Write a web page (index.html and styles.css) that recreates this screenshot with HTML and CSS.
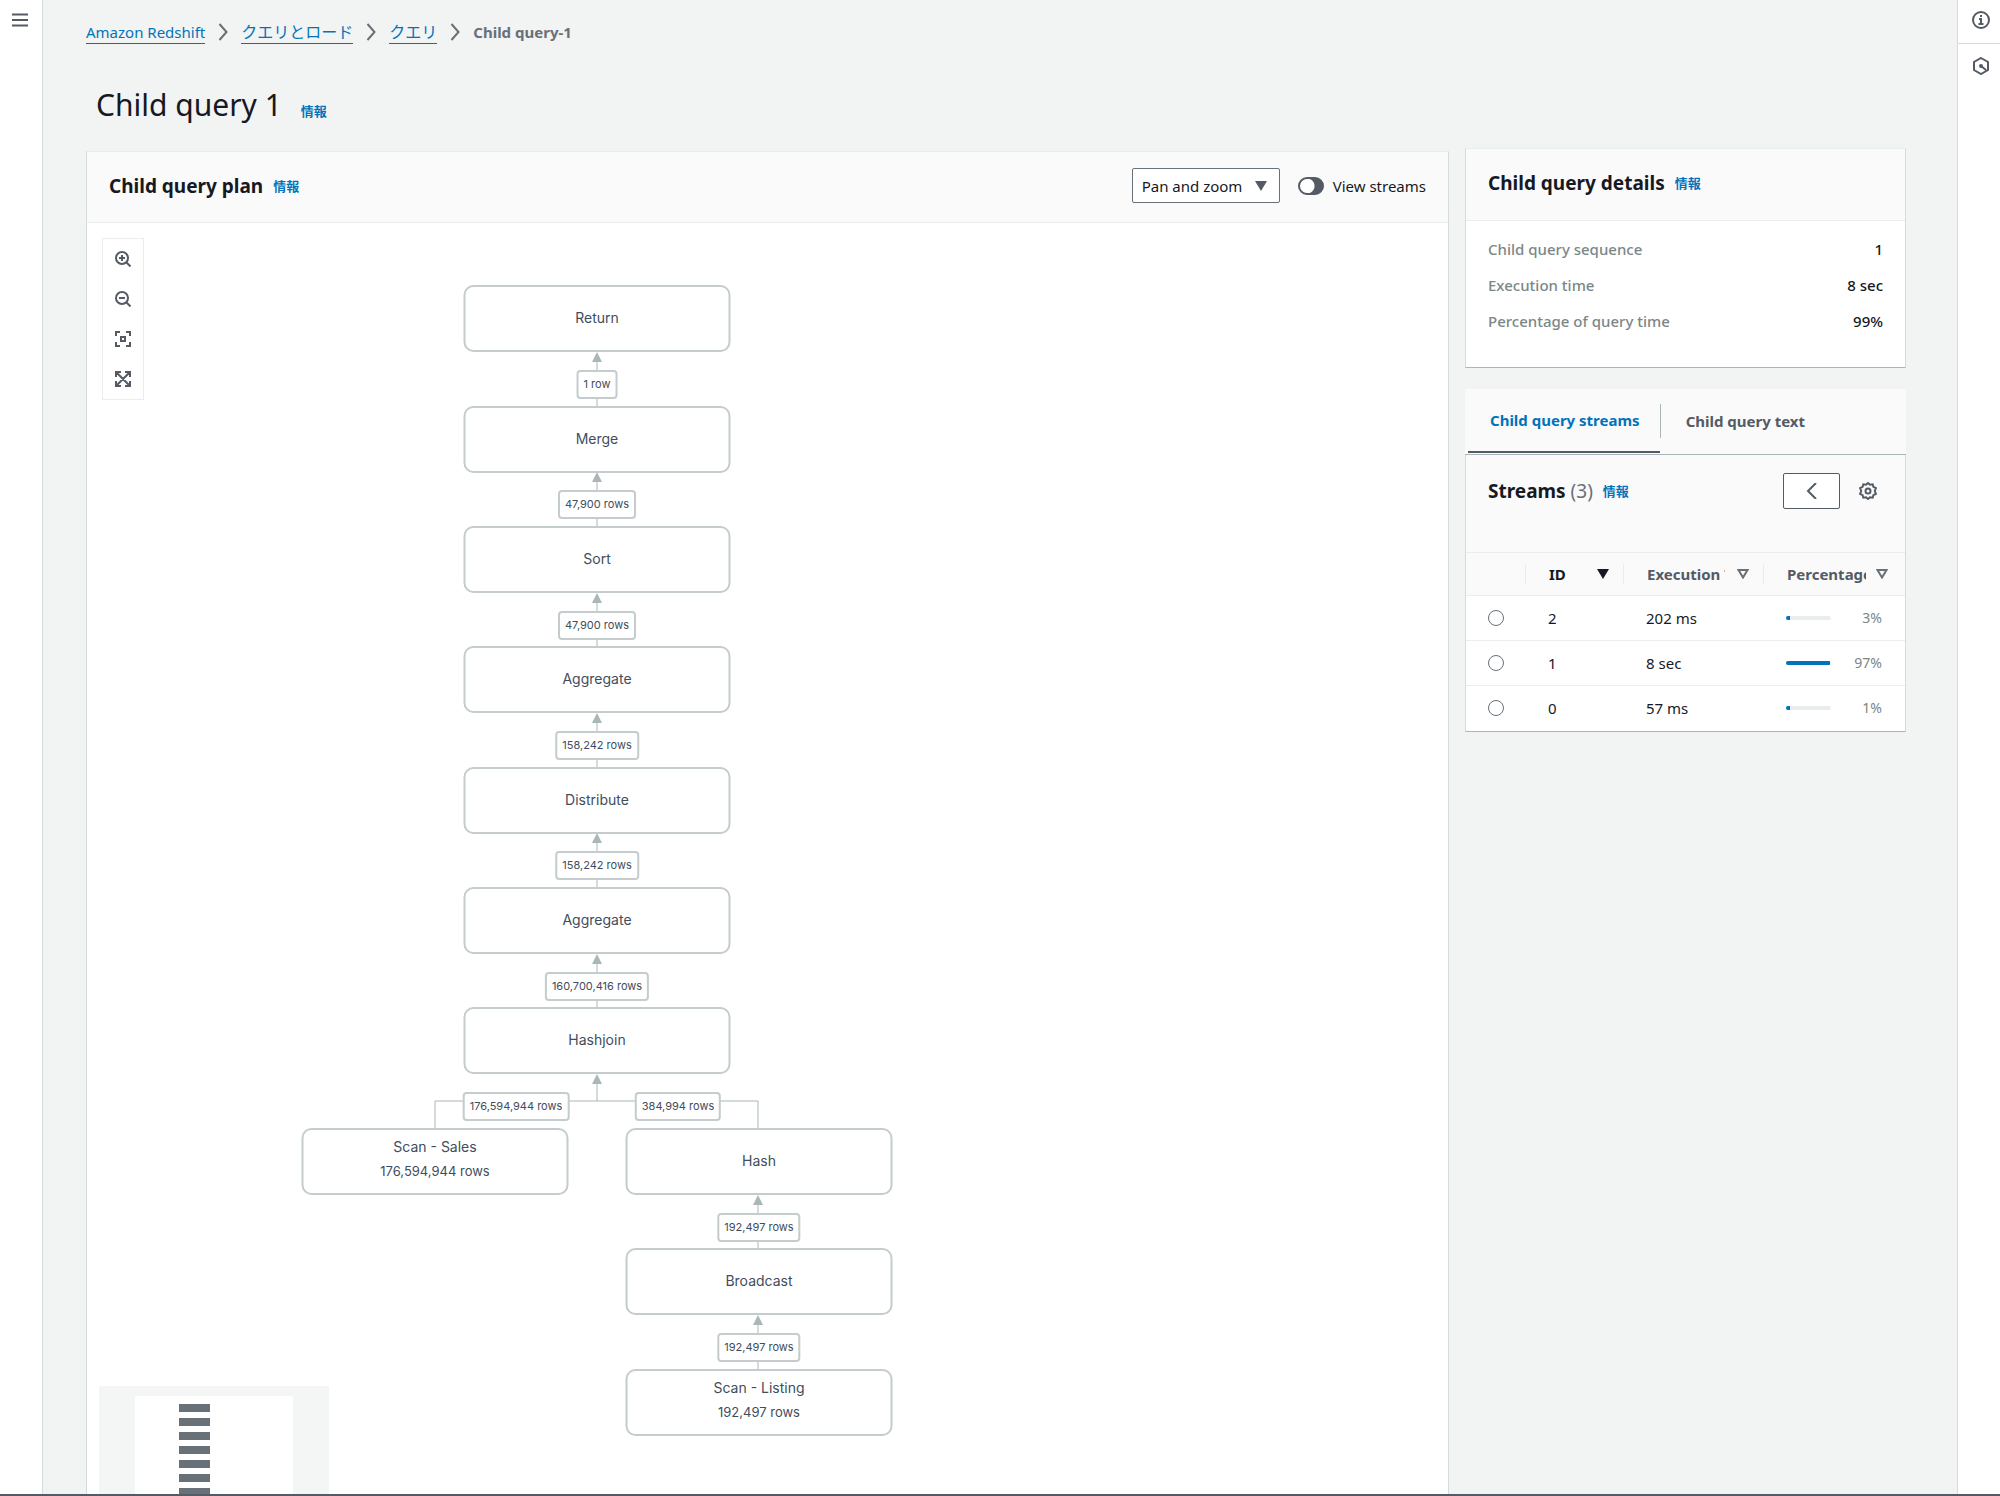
FILE: index.html
```html
<!DOCTYPE html>
<html lang="ja">
<head>
<meta charset="utf-8">
<meta name="viewport" content="width=device-width, initial-scale=1">
<title>Child query 1 - Amazon Redshift</title>
<link rel="stylesheet" href="styles.css">
</head>
<body>
<div class="app">
  <nav class="rail rail-left" aria-label="Navigation">
    <button class="icon-button" type="button" aria-label="Open navigation">
      <svg class="icon" viewBox="0 0 16 16"><path d="M0 2.5h16M0 8h16M0 13.5h16"/></svg>
    </button>
  </nav>

  <main class="main">
    <nav aria-label="Breadcrumb">
      <ol class="breadcrumb">
        <li><a href="#">Amazon Redshift</a></li>
        <li><svg class="chevron" viewBox="0 0 10 18"><path d="M1.5 1l7 8-7 8"/></svg><a class="kana" href="#">クエリとロード</a></li>
        <li><svg class="chevron" viewBox="0 0 10 18"><path d="M1.5 1l7 8-7 8"/></svg><a class="kana" href="#">クエリ</a></li>
        <li><svg class="chevron" viewBox="0 0 10 18"><path d="M1.5 1l7 8-7 8"/></svg><span class="current" aria-current="page">Child query-1</span></li>
      </ol>
    </nav>

    <header class="page-head">
      <h1>Child query 1</h1>
      <a class="info" href="#">情報</a>
    </header>

    <div class="columns">
      <section class="panel plan">
        <header class="panel-head">
          <h2>Child query plan</h2>
          <a class="info" href="#">情報</a>
          <div class="plan-tools">
            <div class="select">
              <select aria-label="Mode"><option>Pan and zoom</option></select>
              <svg class="caret" viewBox="0 0 12 10"><path d="M0 0h12L6 10z"/></svg>
            </div>
            <label class="toggle"><input type="checkbox">View streams</label>
          </div>
        </header>
        <div class="canvas">
          <div class="zoom-bar">
            <button class="icon-button" type="button" aria-label="Zoom in"><svg class="icon" viewBox="0 0 16 16"><circle cx="7" cy="7" r="6"/><path d="M11.5 11.5l4 4M4 7h6M7 4v6"/></svg></button>
            <button class="icon-button" type="button" aria-label="Zoom out"><svg class="icon" viewBox="0 0 16 16"><circle cx="7" cy="7" r="6"/><path d="M11.5 11.5l4 4M4 7h6"/></svg></button>
            <button class="icon-button" type="button" aria-label="Fit to screen"><svg class="icon" viewBox="0 0 16 16"><path d="M1 5V1h4M11 1h4v4M15 11v4h-4M5 15H1v-4M6 6h4v4H6z"/></svg></button>
            <button class="icon-button" type="button" aria-label="Full screen"><svg class="icon" viewBox="0 0 16 16"><path d="M1 6V1h5M10 1h5v5M15 10v5h-5M6 15H1v-5M1 1l14 14M15 1L1 15"/></svg></button>
          </div>

          <svg class="edges" width="806" height="1260" viewBox="0 0 806 1260">
            <path d="M510 135V183M510 255V304M510 376V424M510 496V544M510 616V665M510 737V785M510 857V878M348 906V878H671V906M671 978V1026M671 1098V1146"/>
            <path class="heads" d="M510 129l5 10h-10zM510 249l5 10h-10zM510 370l5 10h-10zM510 490l5 10h-10zM510 610l5 10h-10zM510 731l5 10h-10zM510 851l5 10h-10zM671 972l5 10h-10zM671 1092l5 10h-10z"/>
          </svg>

          <div class="node main-col row-1">Return</div>
          <div class="node main-col row-2">Merge</div>
          <div class="node main-col row-3">Sort</div>
          <div class="node main-col row-4">Aggregate</div>
          <div class="node main-col row-5">Distribute</div>
          <div class="node main-col row-6">Aggregate</div>
          <div class="node main-col row-7">Hashjoin</div>
          <div class="node scan left-col row-8"><span>Scan - Sales</span><span class="rows">176,594,944 rows</span></div>
          <div class="node right-col row-8">Hash</div>
          <div class="node right-col row-9">Broadcast</div>
          <div class="node scan right-col row-10"><span>Scan - Listing</span><span class="rows">192,497 rows</span></div>

          <div class="tag main-col gap-1"><span>1 row</span></div>
          <div class="tag main-col gap-2"><span>47,900 rows</span></div>
          <div class="tag main-col gap-3"><span>47,900 rows</span></div>
          <div class="tag main-col gap-4"><span>158,242 rows</span></div>
          <div class="tag main-col gap-5"><span>158,242 rows</span></div>
          <div class="tag main-col gap-6"><span>160,700,416 rows</span></div>
          <div class="tag join-left gap-7"><span>176,594,944 rows</span></div>
          <div class="tag join-right gap-7"><span>384,994 rows</span></div>
          <div class="tag right-col gap-8"><span>192,497 rows</span></div>
          <div class="tag right-col gap-9"><span>192,497 rows</span></div>

          <div class="minimap">
            <div class="viewport"><i></i><i></i><i></i><i></i><i></i><i></i><i></i></div>
          </div>
        </div>
      </section>

      <aside class="side">
        <section class="panel">
          <header class="panel-head">
            <h2>Child query details</h2>
            <a class="info" href="#">情報</a>
          </header>
          <dl class="details">
            <div><dt>Child query sequence</dt><dd>1</dd></div>
            <div><dt>Execution time</dt><dd>8 sec</dd></div>
            <div><dt>Percentage of query time</dt><dd>99%</dd></div>
          </dl>
        </section>

        <section>
          <div class="tabs" role="tablist">
            <button type="button" role="tab" aria-selected="true">Child query streams</button>
            <button type="button" role="tab" aria-selected="false">Child query text</button>
          </div>
          <div class="panel streams" role="tabpanel">
            <header class="streams-head">
              <h2>Streams <span class="count">(3)</span></h2>
              <a class="info" href="#">情報</a>
              <button class="back" type="button" aria-label="Back"><svg class="icon" viewBox="0 0 16 16"><path d="M12 0L4 8l8 8"/></svg></button>
              <button class="icon-button gear" type="button" aria-label="Preferences"><svg class="icon" viewBox="0 0 18 18"><path d="M9 1l2 1.800 2.700-.5.7 2.600 2.500 1.200L15.800 9l1.100 2.900-2.500 1.200-.7 2.600-2.700-.5L9 17l-2-1.800-2.700.5-.7-2.600-2.500-1.200L2.200 9 1.100 6.100l2.500-1.200.7-2.600 2.700.5z"/><circle cx="9" cy="9" r="2.500"/></svg></button>
            </header>
            <table>
              <colgroup><col class="c-radio"><col class="c-id"><col class="c-time"><col></colgroup>
              <thead>
                <tr>
                  <th aria-label="Select"></th>
                  <th class="sorted"><div class="th"><span>ID</span><svg class="caret" viewBox="0 0 12 10"><path d="M0 0h12L6 10z"/></svg></div></th>
                  <th><div class="th"><span>Execution Time</span><svg class="caret open" viewBox="0 0 12 10"><path d="M1.500 1h9L6 8.500z"/></svg></div></th>
                  <th><div class="th"><span>Percentage</span><svg class="caret open" viewBox="0 0 12 10"><path d="M1.500 1h9L6 8.500z"/></svg></div></th>
                </tr>
              </thead>
              <tbody>
                <tr><td><input type="radio" name="stream" aria-label="Stream 2"></td><td>2</td><td>202 ms</td><td><div class="share"><div class="bar"><div style="width:8%"></div></div>3%</div></td></tr>
                <tr><td><input type="radio" name="stream" aria-label="Stream 1"></td><td>1</td><td>8 sec</td><td><div class="share"><div class="bar"><div style="width:97%"></div></div>97%</div></td></tr>
                <tr><td><input type="radio" name="stream" aria-label="Stream 0"></td><td>0</td><td>57 ms</td><td><div class="share"><div class="bar"><div style="width:8%"></div></div>1%</div></td></tr>
              </tbody>
            </table>
          </div>
        </section>
      </aside>
    </div>
  </main>

  <aside class="rail rail-right" aria-label="Tools">
    <button class="icon-button" type="button" aria-label="Info"><svg class="icon" viewBox="0 0 18 18"><circle cx="9" cy="9" r="8"/><path d="M7 8h2v5M6.500 13h5M9 4v2"/></svg></button>
    <button class="icon-button" type="button" aria-label="Hexagon tool"><svg class="icon" viewBox="0 0 18 18"><path d="M9 1l7 4v8l-7 4-7-4V5zM9 9l5 4"/><circle class="dot" cx="9" cy="9" r="2"/></svg></button>
  </aside>
</div>
</body>
</html>
```

FILE: styles.css
```css
* { box-sizing: border-box; }

body {
  margin: 0;
  font: 15px/20px "Noto Sans", "Noto Sans CJK JP", sans-serif;
  color: #16191f;
  background: #f2f3f3;
}

h1, h2, dl, dd, ol { margin: 0; padding: 0; }
button, select, input { font: inherit; color: inherit; margin: 0; }
a { color: #0073bb; text-decoration: none; }

.app {
  display: flex;
  height: 100vh;
  overflow: hidden;
  border-bottom: 2px solid #545b64;
}

/* Side rails */
.rail {
  flex: none;
  width: 43px;
  background: #fff;
}
.rail-left { border-right: 1px solid #d5dbdb; padding-top: 12px; padding-left: 12px; }
.rail-right { border-left: 1px solid #d5dbdb; }
.rail-right .icon-button { width: 100%; height: 44px; padding: 0 0 4px 4px; }
.rail-right .icon-button:first-child { border-bottom: 1px solid #d5dbdb; }
.rail-right .icon-button:last-child { padding-bottom: 0; }
.rail-right .icon { width: 18px; height: 18px; }

.icon-button {
  display: flex;
  align-items: center;
  justify-content: center;
  padding: 0;
  border: 0;
  background: none;
}
.icon {
  width: 16px;
  height: 16px;
  fill: none;
  stroke: #545b64;
  stroke-width: 2;
}
.dot { fill: #545b64; stroke: none; }

/* Page frame */
.main {
  flex: 1;
  min-width: 0;
  display: flex;
  flex-direction: column;
  padding: 20px 51px 0 43px;
}

.breadcrumb { display: flex; list-style: none; line-height: 24px; }
.breadcrumb li { display: flex; align-items: center; }
.breadcrumb a { line-height: 22px; border-bottom: 1px solid #0073bb; }
.breadcrumb .kana { font-size: 16px; }
.current { font-weight: 700; color: #687078; }
.chevron {
  width: 10px;
  height: 18px;
  margin: 0 13px;
  fill: none;
  stroke: #687078;
  stroke-width: 2;
}

.page-head {
  display: flex;
  align-items: baseline;
  gap: 19px;
  padding: 41px 10px 23px;
}
h1 { font-size: 30px; line-height: 40px; font-weight: 400; }
h2 { font-size: 19px; line-height: 24px; font-weight: 700; }
.info { font-size: 13px; font-weight: 700; }

.columns { flex: 1; display: flex; gap: 16px; min-height: 0; }

.panel {
  background: #fff;
  border: 1px solid #d5dbdb;
  border-top-color: #eaeded;
}
.panel-head {
  display: flex;
  align-items: center;
  gap: 10px;
  height: 72px;
  padding: 0 22px 4px;
  background: #fafafa;
  border-bottom: 1px solid #eaeded;
}

/* Plan */
.plan {
  flex: 1;
  min-width: 0;
  margin-top: 3px;
  display: flex;
  flex-direction: column;
  border-bottom: 0;
}
.plan .panel-head { height: 71px; padding-bottom: 3px; }
.plan-tools { display: flex; align-items: center; gap: 18px; margin-left: auto; }
.select { position: relative; }
.select select {
  appearance: none;
  width: 148px;
  height: 35px;
  padding: 0 9px;
  border: 1px solid #687078;
  border-radius: 2px;
  background: #fff;
}
.caret { width: 12px; height: 10px; fill: currentColor; color: #545b64; flex: none; }
.caret.open { fill: none; stroke: #687078; stroke-width: 2; }
.select .caret { position: absolute; right: 13px; top: 13px; pointer-events: none; }
.toggle { display: flex; align-items: center; gap: 9px; }
.toggle input {
  appearance: none;
  width: 26px;
  height: 18px;
  border-radius: 9px;
  border: 2px solid #545b64;
  background: radial-gradient(circle at 7px 7px, #fff 7px, #545b64 8px);
}

.canvas { position: relative; flex: 1; min-height: 0; overflow: hidden; }
.zoom-bar {
  position: absolute;
  left: 15px;
  top: 15px;
  display: grid;
  grid-auto-rows: 40px;
  width: 42px;
  border: 1px solid #eaeded;
}
.edges { position: absolute; left: 0; top: 0; fill: none; stroke: #aab7b8; stroke-width: 1; }
.heads { fill: #aab7b8; stroke: none; }

.node {
  position: absolute;
  display: flex;
  align-items: center;
  justify-content: center;
  width: 267px;
  height: 67px;
  padding-bottom: 2px;
  transform: translateX(-50%);
  border: 2px solid #c4cccd;
  border-radius: 10px;
  background: #fff;
  font: 14px/25px Inter, sans-serif;
  color: #414d5c;
}
.scan { flex-direction: column; padding-bottom: 6px; }
.rows { font-size: 13px; }
.tag {
  position: absolute;
  transform: translateX(-50%);
  padding: 0 5px;
  border: 2px solid #c4cccd;
  border-radius: 4px;
  background: #fff;
  font: 11px/25px Inter, sans-serif;
  white-space: nowrap;
  color: #414d5c;
}
.main-col { left: 510px; }
.left-col { left: 348px; }
.right-col { left: 672px; }
.join-left { left: 429px; }
.join-right { left: 591px; }
.row-1 { top: 62px; }
.row-2 { top: 183px; }
.row-3 { top: 303px; }
.row-4 { top: 423px; }
.row-5 { top: 544px; }
.row-6 { top: 664px; }
.row-7 { top: 784px; }
.row-8 { top: 905px; }
.row-9 { top: 1025px; }
.row-10 { top: 1146px; }
.gap-1 { top: 147px; }
.gap-2 { top: 267px; }
.gap-3 { top: 388px; }
.gap-4 { top: 508px; }
.gap-5 { top: 628px; }
.gap-6 { top: 749px; }
.gap-7 { top: 869px; }
.gap-8 { top: 990px; }
.gap-9 { top: 1110px; }

.minimap {
  position: absolute;
  left: 12px;
  top: 1163px;
  width: 230px;
  height: 160px;
  padding: 10px 36px;
  background: #f4f5f5;
}
.viewport {
  display: grid;
  grid-auto-rows: 8px;
  gap: 6px;
  height: 140px;
  padding: 8px 44px;
  background: #fff;
}
.viewport i { width: 31px; background: #687078; }

/* Side column */
.side { flex: none; width: 441px; display: flex; flex-direction: column; gap: 21px; }
.side .panel { border-bottom-color: #aab7b8; }
.details { padding: 10px 22px 28px; font-weight: 500; }
.details div { display: flex; justify-content: space-between; line-height: 36px; }
dt { color: #7b8787; }

.tabs {
  display: flex;
  gap: 4px;
  height: 66px;
  padding: 0 3px;
  background: #fafafa;
  border-bottom: 1px solid #aab7b8;
}
.tabs button {
  position: relative;
  height: 64px;
  padding: 0 20px 0 22px;
  border: 0;
  background: none;
  font-weight: 700;
  color: #545b64;
}
.tabs button:first-child { border-bottom: 2px solid #545b64; color: #0073bb; }
.tabs button:first-child::after {
  content: "";
  position: absolute;
  right: -1px;
  top: 15px;
  height: 34px;
  border-right: 1px solid #aab7b8;
}

.streams { border-top: 0; }
.streams-head {
  display: flex;
  align-items: center;
  height: 97px;
  padding: 0 28px 26px 22px;
  background: #fafafa;
}
.count { font-weight: 400; color: #687078; }
.streams-head .info { margin-left: 10px; }
.back {
  display: flex;
  align-items: center;
  justify-content: center;
  width: 57px;
  height: 36px;
  margin-left: auto;
  border: 1px solid #545b64;
  border-radius: 2px;
  background: #fff;
}
.gear { margin-left: 19px; }
.gear .icon { width: 18px; height: 18px; }

table { width: 100%; table-layout: fixed; border-collapse: collapse; }
.c-radio { width: 59px; }
.c-id { width: 98px; }
.c-time { width: 140px; }
th, td { padding: 0 0 0 23px; text-align: left; }
thead tr {
  height: 43px;
  background: #fafafa;
  border-top: 1px solid #eaeded;
}
tbody tr { height: 45px; border-top: 1px solid #eaeded; }
.th {
  display: flex;
  align-items: center;
  gap: 12px;
  margin-left: -23px;
  padding: 0 14px 0 23px;
  border-left: 1px solid #eaeded;
  color: #545b64;
}
.th span { flex: 1; min-width: 0; overflow: hidden; white-space: nowrap; }
th:last-child .th { gap: 10px; padding-right: 17px; }
.sorted .th, .sorted .caret { color: #16191f; }
td:first-child { padding-left: 22px; }
input[type="radio"] {
  display: block;
  appearance: none;
  width: 16px;
  height: 16px;
  border: 1px solid #687078;
  border-radius: 50%;
  background: #fff;
}
.share {
  display: flex;
  align-items: center;
  justify-content: space-between;
  padding-right: 23px;
  font-size: 14px;
  color: #7b8787;
}
.bar { width: 45px; height: 4px; border-radius: 2px; background: #eaeded; overflow: hidden; }
.bar div { height: 100%; background: #0073bb; }
```
